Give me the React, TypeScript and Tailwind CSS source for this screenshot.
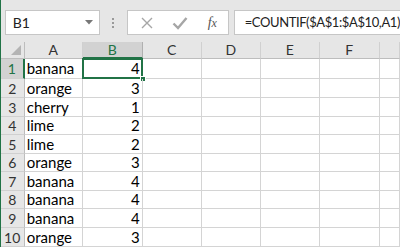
const cols = ["A", "B", "C", "D", "E", "F", ""];
const colW = ["w-[58px]", "w-[60px]", "w-[59px]", "w-[59px]", "w-[59px]", "w-[60px]", "flex-1"];
const rowH = ["h-[20px]", "h-[19px]", "h-[19px]", "h-[18px]", "h-[19px]", "h-[18px]", "h-[19px]", "h-[18px]", "h-[19px]", "h-[19px]"];

const data: [string, number][] = [
  ["banana", 4],
  ["orange", 3],
  ["cherry", 1],
  ["lime", 2],
  ["lime", 2],
  ["orange", 3],
  ["banana", 4],
  ["banana", 4],
  ["banana", 4],
  ["orange", 3],
];

const cellFont = { fontFamily: '"Lato", "Open Sans", sans-serif' };

function FormulaBar() {
  return (
    <div className="h-[43px] bg-[#e6e6e6] flex items-start pt-[10px] pl-[4px]">
      <div className="w-[95px] h-[25px] bg-white border border-[#c6c6c6] flex items-center pl-[7px] pr-[6px]">
        <span className="text-[14px] text-[#222] flex-1" style={cellFont}>
          B1
        </span>
        <svg width="8" height="5" viewBox="0 0 8 5">
          <path d="M0 0 L8 0 L4 4.5 Z" fill="#777" />
        </svg>
      </div>
      <div className="w-[27px] h-[25px] flex flex-col items-center justify-center gap-[2px]">
        <span className="w-[2px] h-[2px] bg-[#999]" />
        <span className="w-[2px] h-[2px] bg-[#999]" />
        <span className="w-[2px] h-[2px] bg-[#999]" />
      </div>
      <div className="w-[102px] h-[25px] bg-white border border-[#c6c6c6] flex items-center">
        <svg width="14" height="14" viewBox="0 0 14 14" className="ml-[12px]">
          <path d="M2 2 L12 12 M12 2 L2 12" stroke="#a6a6a6" strokeWidth="1.4" />
        </svg>
        <svg width="16" height="14" viewBox="0 0 16 14" className="ml-[18px]">
          <path d="M1.5 7.5 L6 12 L14.5 2" stroke="#a6a6a6" strokeWidth="2.4" fill="none" />
        </svg>
        <span
          className="ml-[20px] text-[14px] italic text-[#555]"
          style={{ fontFamily: '"Liberation Serif", serif' }}
        >
          f<span className="text-[12px]">x</span>
        </span>
      </div>
      <div className="flex-1 ml-[5px] h-[25px] bg-white border border-[#c6c6c6] border-r-0 flex items-center pl-[10px] overflow-hidden">
        <span className="text-[13px] tracking-[-0.4px] text-[#222] whitespace-nowrap" style={cellFont}>
          =COUNTIF($A$1:$A$10,A1)
        </span>
      </div>
    </div>
  );
}

export default function App() {
  return (
    <div className="w-[400px] h-[247px] overflow-hidden flex bg-white">
      <div className="w-[1px] bg-[#217346]" />
      <div className="flex-1 flex flex-col">
        <FormulaBar />
        <div className="flex h-[17px] bg-[#e6e6e6] text-[14px] text-[#333]" style={cellFont}>
          <div className="w-[24px] border-r border-b border-[#bdbdbd] relative">
            <svg width="10" height="10" viewBox="0 0 10 10" className="absolute right-[3px] bottom-[3px]">
              <path d="M10 0 L10 10 L0 10 Z" fill="#b4b4b4" />
            </svg>
          </div>
          {cols.map((c, i) => (
            <div
              key={i}
              className={
                colW[i] +
                " flex items-center justify-center border-r leading-none " +
                (c === "B"
                  ? "bg-[#d2d2d2] text-[#217346] border-b-2 border-b-[#217346] border-r-[#b0b0b0]"
                  : "border-b border-b-[#bdbdbd] border-r-[#d0d0d0]")
              }
            >
              {c}
            </div>
          ))}
        </div>
        {data.map(([name, n], r) => (
          <div key={r} className={"flex " + rowH[r]} style={cellFont}>
            <div
              className={
                "w-[24px] flex items-center justify-center text-[14px] border-b border-[#d0d0d0] " +
                (r === 0
                  ? "bg-[#d2d2d2] text-[#217346] border-r-2 border-r-[#217346]"
                  : "bg-[#e6e6e6] text-[#333] border-r border-r-[#bdbdbd]")
              }
            >
              {r + 1}
            </div>
            <div className={colW[0] + " border-r border-b border-[#d4d4d4] flex items-center pl-[2px] text-[15px] text-black"}>
              {name}
            </div>
            <div className={colW[1] + " relative border-r border-b border-[#d4d4d4] flex items-center justify-end pr-[2px] text-[15px] text-black"}>
              {n}
              {r === 0 && (
                <>
                  <div className="absolute left-[-1px] top-[-1px] right-[-1px] bottom-[-1px] border-2 border-[#217346]" />
                  <div className="absolute right-[-4px] bottom-[-4px] w-[6px] h-[6px] bg-[#217346] border border-white" />
                </>
              )}
            </div>
            {colW.slice(2).map((w, i) => (
              <div key={i} className={w + " border-r border-b border-[#d4d4d4]"} />
            ))}
          </div>
        ))}
      </div>
    </div>
  );
}
